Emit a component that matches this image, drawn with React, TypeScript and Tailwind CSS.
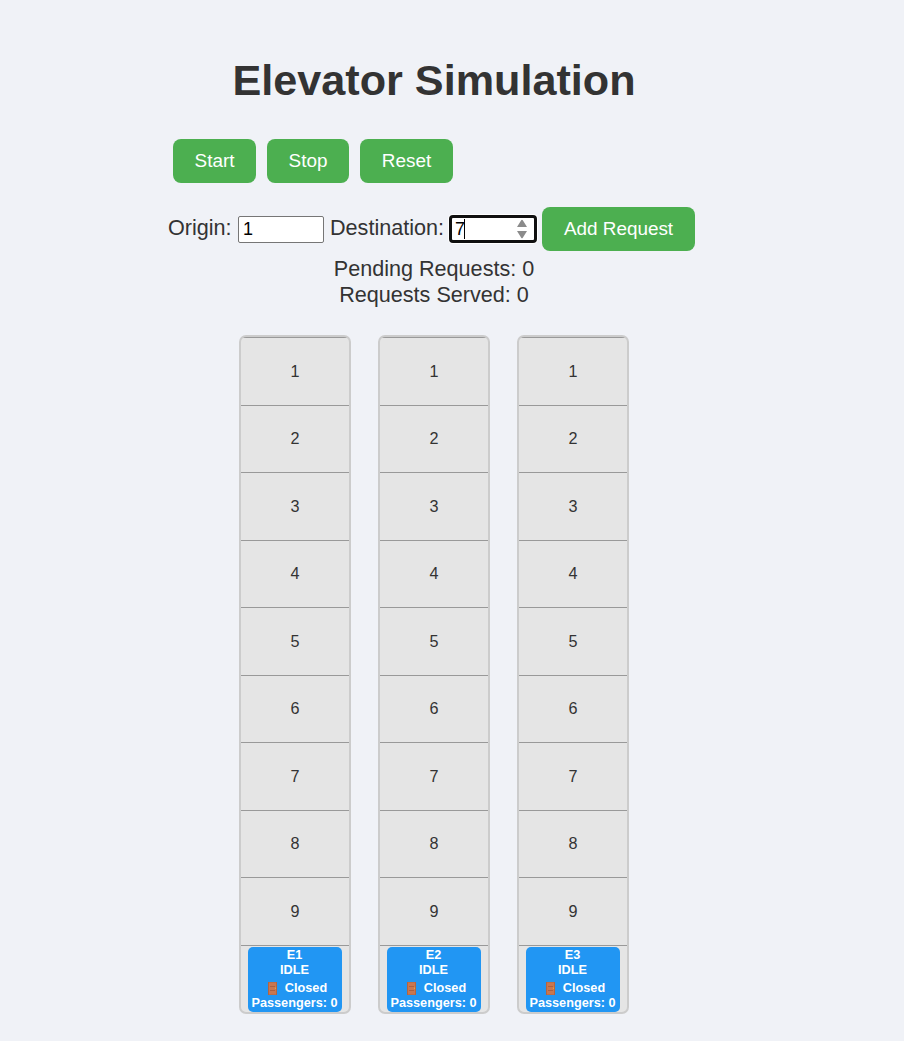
import React, { useState } from 'react';

const floors = [1, 2, 3, 4, 5, 6, 7, 8, 9, 10];

function Button({ className, children }: { className: string; children: React.ReactNode }) {
  return (
    <button
      className={`flex h-[44px] shrink-0 items-center justify-center whitespace-nowrap rounded-[8px] bg-[#4caf50] pb-px text-[18.9px] text-white ${className}`}
    >
      {children}
    </button>
  );
}

function Door() {
  return (
    <svg className="mr-[8px] h-[13px] w-[9px]" viewBox="0 0 9 13">
      <rect width="9" height="13" fill="#b5643f" />
      <rect x="1" y="0.5" width="7" height="12" fill="#c77751" />
      <path d="M2 4.5h5M2 8.5h5" stroke="#ad603f" strokeWidth="1" />
      <rect x="7" y="5.5" width="1" height="1.5" fill="#e5a33a" />
    </svg>
  );
}

function Shaft({ id }: { id: number }) {
  return (
    <div className="relative h-[679px] w-[112px] overflow-hidden rounded-[7px] border-2 border-[#ccc] bg-[#e5e5e5]">
      {floors.map((floor) => (
        <div
          key={floor}
          className="flex h-[67.5px] items-center justify-center border-t border-[#999] pb-px text-[16.2px]"
        >
          {floor < 10 ? floor : null}
        </div>
      ))}
      <div className="absolute left-[7px] top-[610px] flex h-[65px] w-[94px] flex-col items-center whitespace-nowrap rounded-[5px] bg-[#2196f3] pr-px pt-[1px] text-[12.7px] font-bold leading-[15px] text-white">
        <span>E{id}</span>
        <span>IDLE</span>
        <span className="mt-[3px] flex h-[15px] items-center pl-[6px]">
          <Door />
          Closed
        </span>
        <span>Passengers: 0</span>
      </div>
    </div>
  );
}

export default function App() {
  const [origin, setOrigin] = useState('1');
  const [destination, setDestination] = useState('7');
  return (
    <div className="h-[1041px] w-full overflow-hidden bg-[#f0f2f7] font-['Liberation_Sans',Arial,sans-serif] text-[21.6px] leading-[26px] text-[#333]">
      <main className="flex w-[868px] flex-col items-center pt-[55px]">
        <h1 className="h-[50px] text-[43.2px] font-bold leading-[50px]">Elevator Simulation</h1>
        <div className="mt-[34px] flex w-[522px] gap-[11px]">
          <Button className="w-[83px]">Start</Button>
          <Button className="w-[82px]">Stop</Button>
          <Button className="w-[93px]">Reset</Button>
        </div>
        <div className="mt-[24px] flex h-[44px] w-[532px] items-center">
          <label className="w-[70px] whitespace-nowrap pb-[2px]">Origin:</label>
          <input
            className="h-[27px] w-[86px] rounded-[2px] border border-[#767676] bg-white pl-[4px] text-[18px] text-black outline-none"
            value={origin}
            onChange={(e) => setOrigin(e.target.value)}
          />
          <label className="ml-[6px] w-[119px] whitespace-nowrap pb-[2px]">Destination:</label>
          <div className="relative flex h-[28px] w-[88px] items-center rounded-[4px] border-[3px] border-[#101010] bg-white shadow-[0_0_0_1px_#fff]">
            <input
              className="w-[10px] flex-1 bg-transparent pl-[3px] text-[18px] text-black outline-none"
              value={destination}
              onChange={(e) => setDestination(e.target.value)}
            />
            <span className="absolute left-[12px] top-px h-[20px] w-px bg-black" />
            <svg className="mr-[6px] h-[20px] w-[12px]" viewBox="0 0 12 20" fill="#8b8b8b">
              <path d="M1 8 5.2 1.3Q6 0 6.8 1.3L11 8ZM1 12h10L6.8 18.7Q6 20 5.2 18.7Z" />
            </svg>
          </div>
          <Button className="ml-[5px] w-[153px]">Add Request</Button>
        </div>
        <div className="mt-[5px] text-center">
          <p>Pending Requests: 0</p>
          <p>Requests Served: 0</p>
        </div>
        <div className="mt-[27px] flex gap-[27px]">
          <Shaft id={1} />
          <Shaft id={2} />
          <Shaft id={3} />
        </div>
      </main>
    </div>
  );
}
